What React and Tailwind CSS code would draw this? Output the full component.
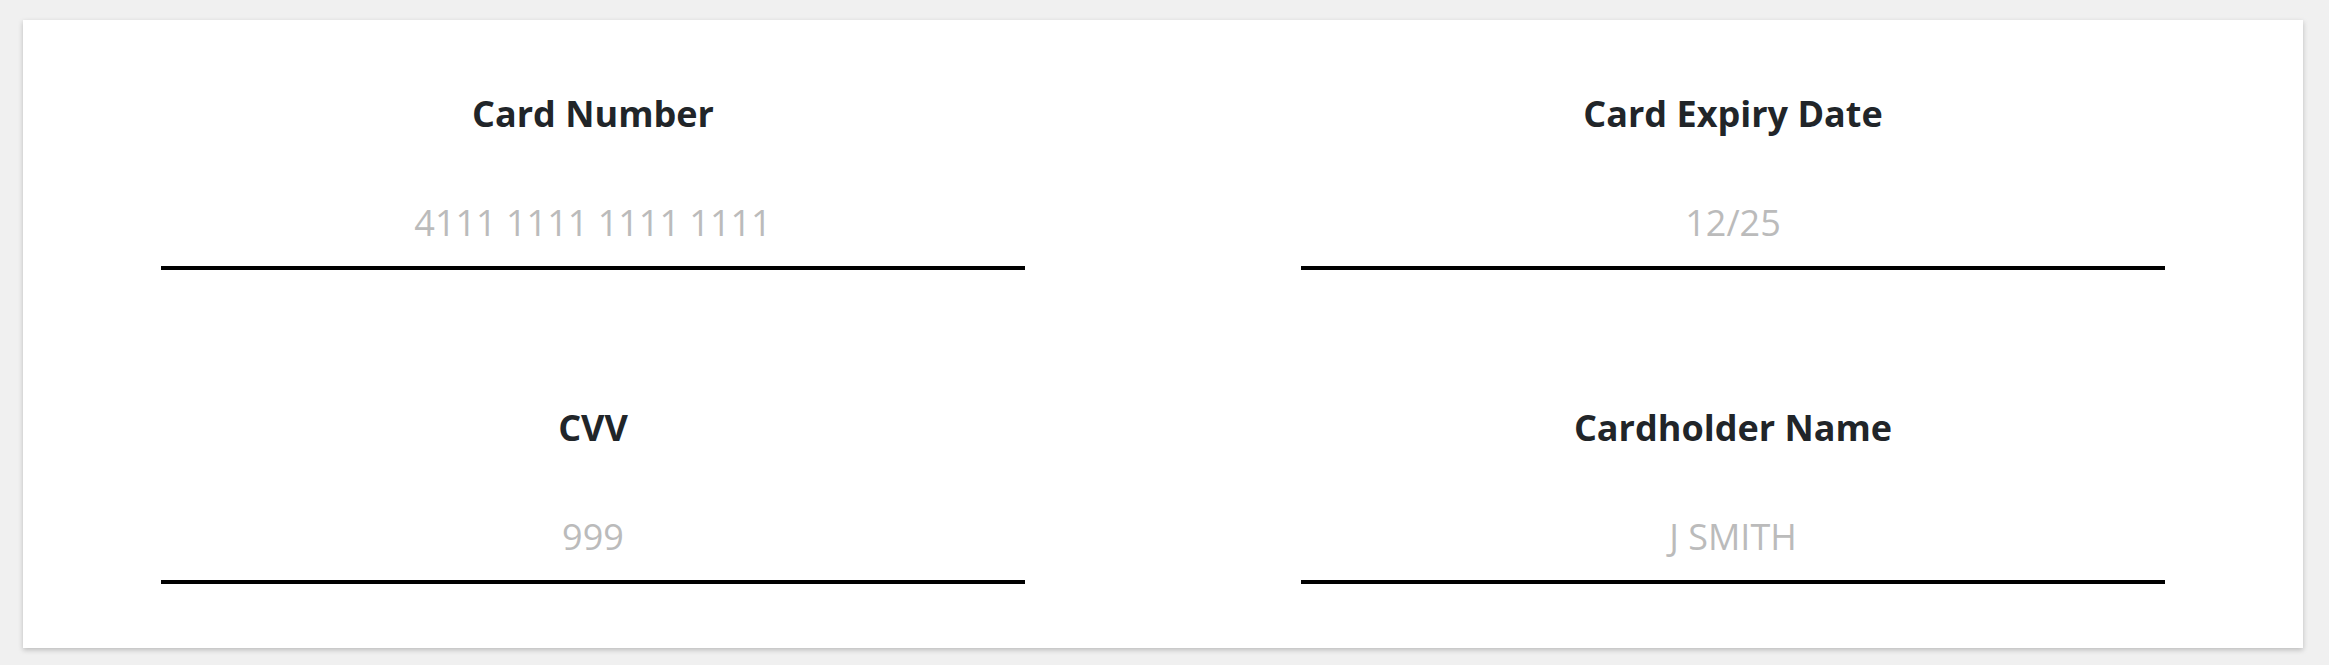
export default function App() {
  const fields = [
    { label: "Card Number", placeholder: "4111 1111 1111 1111" },
    { label: "Card Expiry Date", placeholder: "12/25" },
    { label: "CVV", placeholder: "999" },
    { label: "Cardholder Name", placeholder: "J SMITH" },
  ];

  return (
    <div className="min-h-[665px] bg-[#f0f0f0] pl-[23px] pt-[20px] font-['Open_Sans',sans-serif]">
      <div className="w-[2280px] h-[628px] bg-white shadow-[0_2px_5px_rgba(0,0,0,0.22)] pt-[70px]">
        <div className="grid grid-cols-2 gap-y-[134px]">
          {fields.map((f) => (
            <div key={f.label} className="flex justify-center">
              <label className="w-[864px] flex flex-col items-center">
                <span className="text-[36px] leading-[48px] font-bold text-[#212529]">
                  {f.label}
                </span>
                <input
                  type="text"
                  placeholder={f.placeholder}
                  className="mt-[60px] w-full bg-transparent border-0 border-b-4 border-black outline-none text-center text-[36px] leading-[48px] h-[72px] pb-[20px] text-[#212529] placeholder:text-[#bbbbbb]"
                />
              </label>
            </div>
          ))}
        </div>
      </div>
    </div>
  );
}
